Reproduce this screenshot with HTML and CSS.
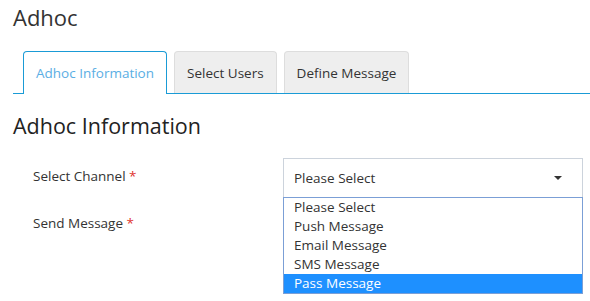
FILE: index.html
```html
<!DOCTYPE html>
<html lang="en">
<head>
    <meta charset="UTF-8">
    <meta name="viewport" content="width=device-width, initial-scale=1.0">
    <title>Adhoc</title>
    <link rel="stylesheet" href="styles.css">
</head>
<body>
    <h1 class="page-title">Adhoc</h1>

    <!-- Tabs -->
    <ul class="tabs">
        <li class="tab active">Adhoc Information</li>
        <li class="tab">Select Users</li>
        <li class="tab">Define Message</li>
    </ul>

    <h2 class="section-title">Adhoc Information</h2>

    <form class="adhoc-form">
        <div class="form-row">
            <label>Select Channel <span class="req">*</span></label>
            <div class="select-wrap">
                <div class="select-box">
                    <span>Please Select</span>
                    <span class="caret"></span>
                </div>
                <ul class="select-list">
                    <li>Please Select</li>
                    <li>Push Message</li>
                    <li>Email Message</li>
                    <li>SMS Message</li>
                    <li class="selected">Pass Message</li>
                </ul>
            </div>
        </div>
        <div class="form-row">
            <label>Send Message <span class="req">*</span></label>
            <div></div>
        </div>
    </form>
</body>
</html>
```

FILE: styles.css
```css
html {
    height: 100%;
}

body {
    font-family: "Open Sans", Arial, sans-serif;
    font-size: 13.5px;
    color: #333;
    margin: 0;
    padding: 0 0 0 13px;
    min-height: 100%;
    background-color: #fff;
}

.page-title {
    font-size: 22px;
    font-weight: normal;
    margin: 2px 0 0 0;
    line-height: 30px;
}

.tabs {
    list-style: none;
    margin: 19px 0 0 0;
    padding: 0 0 0 10px;
    display: flex;
    gap: 7px;
    border-bottom: 1px solid #1a9bd6;
    height: 42px;
}

.tab {
    height: 42px;
    box-sizing: border-box;
    padding: 0 12px;
    display: flex;
    align-items: center;
    background-color: #eee;
    border: 1px solid #ddd;
    border-bottom: none;
    border-radius: 4px 4px 0 0;
}

.tab.active {
    height: 43px;
    background-color: #fff;
    border-color: #1a9bd6;
    color: #5aaee4;
}

.section-title {
    font-size: 21.5px;
    font-weight: normal;
    color: #222;
    margin: 17px 0 0 0;
    line-height: 30px;
}

.adhoc-form {
    margin-top: 17px;
}

.form-row {
    display: grid;
    grid-template-columns: 270px 300px;
    margin-bottom: 7px;
    min-height: 40px;
}

.form-row label {
    padding: 9px 0 0 20px;
}

.req {
    color: #e0322e;
}

.select-wrap {
    position: relative;
}

.select-box {
    height: 40px;
    box-sizing: border-box;
    border: 1px solid #ccd3dc;
    padding: 0 20px 0 10px;
    display: flex;
    align-items: center;
    justify-content: space-between;
}

.caret {
    width: 0;
    height: 0;
    border-left: 4px solid transparent;
    border-right: 4px solid transparent;
    border-top: 4px solid #333;
}

.select-list {
    position: absolute;
    top: 39px;
    left: 0;
    right: 0;
    margin: 0;
    padding: 0;
    list-style: none;
    background-color: #fff;
    border: 1px solid #7b9fd6;
}

.select-list li {
    height: 19px;
    line-height: 19px;
    padding-left: 10px;
}

.select-list li.selected {
    background-color: #1e90ff;
    color: #fff;
}
```
